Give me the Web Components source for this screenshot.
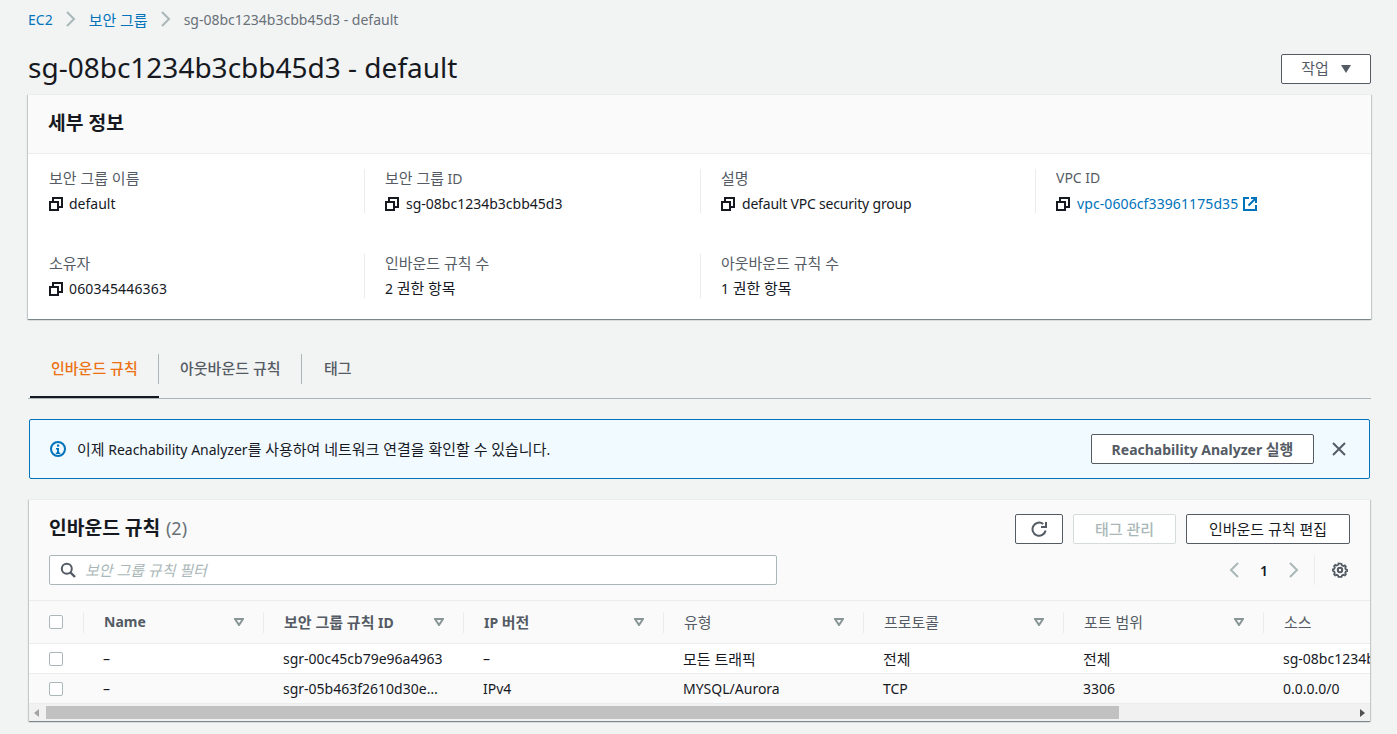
<!DOCTYPE html>
<html lang="ko">
<head>
<meta charset="utf-8">
<title>sg-08bc1234b3cbb45d3 - default</title>
<style>
  html, body { margin: 0; height: 100%; overflow: hidden; }
  body {
    --ko: 1.07;
    background: #f2f3f3;
    color: #16191f;
    font-family: "Noto Sans", "Noto Sans CJK KR", sans-serif;
    font-size: 14px;
  }
</style>
</head>
<body>
<sg-page></sg-page>

<script>
// hangul runs are drawn a bit larger than latin, like in the reference
const ko = (s) => s.replace(/[가-힣]+(?: [가-힣]+)*/g, (m) => `<span style="font-size:calc(1em * var(--ko))">${m}</span>`);

const ICONS = {
  copy: `<svg width="14" height="14" viewBox="0 0 14 14" fill="none" stroke="#16191f" stroke-width="2"><rect x="1" y="5" width="8" height="8"/><path d="M4 4V1h9v9h-3"/></svg>`,
  external: `<svg width="14" height="14" viewBox="0 0 14 14" fill="none" stroke="#0073bb" stroke-width="2"><path d="M6 1H1v12h12V8"/><path d="M5.5 8.5L12.5 1.5"/><path d="M8 1h5v5"/></svg>`,
  info: `<svg width="16" height="16" viewBox="0 0 16 16"><circle cx="8" cy="8" r="7" fill="none" stroke="#0073bb" stroke-width="2"/><rect x="7" y="3.5" width="2.2" height="2.2" fill="#0073bb"/><path d="M6 7h3v4.5h1.2V13H5.8v-1.5H7V8.4H6z" fill="#0073bb"/></svg>`,
  close: `<svg width="14" height="14" viewBox="0 0 14 14" fill="none" stroke="#545b64" stroke-width="2"><path d="M1 1l12 12M13 1L1 13"/></svg>`,
  refresh: `<svg width="17" height="17" viewBox="0 0 17 17" fill="none" stroke="#545b64" stroke-width="2"><path d="M14.6 9.5A6.6 6.6 0 1 1 12.2 3"/><path d="M15 1v5h-5" /></svg>`,
  search: `<svg width="16" height="16" viewBox="0 0 16 16" fill="none" stroke="#545b64" stroke-width="2"><circle cx="6.8" cy="6.8" r="5"/><path d="M10.5 10.5l4.5 4.5" stroke-width="2.4"/></svg>`,
  gear: `<svg width="16" height="16" viewBox="0 0 16 16" fill="none" stroke="#545b64" stroke-width="2"><path d="M8 1l1.7.3.5 1.6 1.6.7 1.5-.7 1.2 1.3-.7 1.5.6 1.5 1.6.6v1.4l-1.6.6-.6 1.5.7 1.5-1.2 1.3-1.5-.7-1.6.7-.5 1.6H6.3l-.5-1.6-1.6-.7-1.5.7-1.2-1.3.7-1.5-.6-1.5L0 8.7V7.3l1.6-.6.6-1.5-.7-1.5 1.2-1.3 1.5.7 1.6-.7.5-1.6z" transform="translate(.8 .8) scale(.9)"/><circle cx="8" cy="8" r="2.2"/></svg>`,
  chevronLeft: `<svg width="10" height="16" viewBox="0 0 10 16" fill="none" stroke="#aab7b8" stroke-width="2"><path d="M9 1L2 8l7 7"/></svg>`,
  chevronRight: `<svg width="10" height="16" viewBox="0 0 10 16" fill="none" stroke="#aab7b8" stroke-width="2"><path d="M1 1l7 7-7 7"/></svg>`,
  sort: `<svg width="10" height="8" viewBox="0 0 10 8" fill="none" stroke="#879596" stroke-width="2"><path d="M1 1h8L5 7z"/></svg>`
};

class SgButton extends HTMLElement {
  constructor() {
    super();
    this.attachShadow({ mode: "open" });
    this.shadowRoot.innerHTML = /* html */`
      <style>
        :host {
          display: inline-flex;
          align-items: center;
          justify-content: center;
          box-sizing: border-box;
          height: 30px;
          padding: 0 20px 2px;
          background: #fff;
          border: 1px solid #545b64;
          border-radius: 2px;
          color: #545b64;
          font-size: 14px;
          font-weight: 500;
          white-space: nowrap;
        }
        :host([disabled]) {
          border-color: #d5dbdb;
          color: #aab7b8;
        }
      </style>
      <slot></slot>`;
  }
}

class SgBreadcrumbs extends HTMLElement {
  constructor() {
    super();
    this.attachShadow({ mode: "open" });
    this.shadowRoot.innerHTML = /* html */`
      <style>
        :host {
          display: flex;
          align-items: center;
          height: 38px;
          font-size: 14px;
          color: #687078;
        }
        a { color: #0073bb; text-decoration: none; }
        svg { margin: 0 13px; }
      </style>
      <a>EC2</a>
      ${ICONS.chevronRight}
      <a>${ko("보안 그룹")}</a>
      ${ICONS.chevronRight}
      <span>sg-08bc1234b3cbb45d3 - default</span>`;
  }
}

class SgPageHeader extends HTMLElement {
  constructor() {
    super();
    this.attachShadow({ mode: "open" });
    this.shadowRoot.innerHTML = /* html */`
      <style>
        :host {
          display: flex;
          align-items: center;
          justify-content: space-between;
          height: 56px;
        }
        h1 { margin: 2px 0 0; font-size: 28px; font-weight: 400; line-height: 36px; color: #16191f; }
        sg-button { align-self: flex-end; margin-bottom: 10px; width: 90px; padding: 0 0 3px; gap: 12px; font-weight: 400; }
        i { width: 0; height: 0; margin-top: 3px; border: 5px solid transparent; border-top: 8px solid #545b64; border-bottom: 0; }
      </style>
      <h1><slot></slot></h1>
      <sg-button><span>${ko("작업")}</span><i></i></sg-button>`;
  }
}

class SgDetail extends HTMLElement {
  constructor() {
    super();
    this.attachShadow({ mode: "open" });
  }
  connectedCallback() {
    const copy = this.hasAttribute("copy") ? ICONS.copy : "";
    this.shadowRoot.innerHTML = /* html */`
      <style>
        :host {
          display: block;
          box-sizing: border-box;
          height: 44px;
          padding-left: 20px;
          border-left: 1px solid #eaeded;
        }
        :host([first]) { padding-left: 0; border-left: 0; }
        .label { height: 25px; margin-top: -1px; line-height: 20px; color: #545b64; }
        .value { display: flex; align-items: center; gap: 7px; height: 22px; line-height: 22px; color: #16191f; }
        :host([first]) .value { gap: 6px; }
        svg { flex: none; }
      </style>
      <div class="label">${ko(this.getAttribute("label"))}</div>
      <div class="value">${copy}<span><slot></slot></span></div>`;
  }
}

class SgCard extends HTMLElement {
  constructor() {
    super();
    this.attachShadow({ mode: "open" });
    this.shadowRoot.innerHTML = /* html */`
      <style>
        :host {
          display: block;
          background: #fff;
          border-top: 1px solid #eaeded;
          box-shadow: 0 1px 1px 0 rgba(0,28,36,.3), 1px 1px 1px 0 rgba(0,28,36,.15), -1px 1px 1px 0 rgba(0,28,36,.15);
        }
      </style>
      <slot></slot>`;
  }
}

class SgDetailsCard extends HTMLElement {
  constructor() {
    super();
    this.attachShadow({ mode: "open" });
    this.shadowRoot.innerHTML = /* html */`
      <style>
        :host { display: block; }
        header {
          box-sizing: border-box;
          height: 59px;
          padding: 0 20px 5px;
          display: flex;
          align-items: center;
          background: #fafafa;
          border-bottom: 1px solid #eaeded;
          font-size: 18px;
          font-weight: 700;
          color: #16191f;
        }
        .grid {
          box-sizing: border-box;
          height: 165px;
          padding: 15px 0 0 21px;
          display: grid;
          grid-template-columns: 315px 336px 335px 336px;
          grid-auto-rows: 85px;
          align-content: start;
        }
        a { color: #0073bb; display: inline-flex; align-items: center; gap: 5px; letter-spacing: .1px; }
        .wide { letter-spacing: .17px; }
        .narrow { letter-spacing: -.2px; }
        .up { position: relative; top: -1px; }
      </style>
      <sg-card>
        <header><span>${ko("세부 정보")}</span></header>
        <div class="grid">
          <sg-detail first label="보안 그룹 이름" copy>default</sg-detail>
          <sg-detail label="보안 그룹 ID" copy>sg-08bc1234b3cbb45d3</sg-detail>
          <sg-detail label="설명" copy><span class="narrow">default VPC security group</span></sg-detail>
          <sg-detail label="VPC ID" copy><a>vpc-0606cf33961175d35 ${ICONS.external}</a></sg-detail>
          <sg-detail first label="소유자" copy><span class="wide">060345446363</span></sg-detail>
          <sg-detail label="인바운드 규칙 수"><span class="up">2 ${ko("권한 항목")}</span></sg-detail>
          <sg-detail label="아웃바운드 규칙 수"><span class="up">1 ${ko("권한 항목")}</span></sg-detail>
        </div>
      </sg-card>`;
  }
}

class SgTabs extends HTMLElement {
  constructor() {
    super();
    this.attachShadow({ mode: "open" });
    this.shadowRoot.innerHTML = /* html */`
      <style>
        :host {
          display: flex;
          box-sizing: border-box;
          height: 60px;
          margin-top: 20px;
          padding: 15px 0 0 2px;
          border-bottom: 1px solid #aab7b8;
          font-size: 15px;
          font-weight: 500;
          color: #545b64;
        }
        .tab { position: relative; height: 30px; line-height: 28px; padding: 0 21px; border-right: 1px solid #aab7b8; white-space: nowrap; }
        .tab:last-child { border-right: 0; padding-left: 22px; }
        .active { color: #ec7211; width: 86px; }
        .second { width: 100px; }
        .active::after {
          content: "";
          position: absolute;
          left: 0; right: -1px; bottom: -14px;
          height: 2px;
          background: #16191f;
        }
      </style>
      <div class="tab active">인바운드 규칙</div>
      <div class="tab second">아웃바운드 규칙</div>
      <div class="tab">태그</div>`;
  }
}

class SgAlert extends HTMLElement {
  constructor() {
    super();
    this.attachShadow({ mode: "open" });
    this.shadowRoot.innerHTML = /* html */`
      <style>
        :host {
          display: flex;
          align-items: center;
          box-sizing: border-box;
          height: 60px;
          margin: 20px 1px 0;
          padding: 0 23px 0 20px;
          background: #f1faff;
          border: 1px solid #0073bb;
          border-radius: 2px;
          color: #16191f;
        }
        .icon { display: flex; margin-right: 11px; }
        .text { flex: 1; padding-bottom: 2px; }
        sg-button { width: 223px; padding: 0 0 2px; font-weight: 700; }
        .close { display: flex; margin-left: 18px; }
      </style>
      <span class="icon">${ICONS.info}</span>
      <span class="text">${ko("이제")} Reachability Analyzer${ko("를 사용하여 네트워크 연결을 확인할 수 있습니다")}.</span>
      <sg-button><span>Reachability Analyzer ${ko("실행")}</span></sg-button>
      <span class="close">${ICONS.close}</span>`;
  }
}

class SgCheckbox extends HTMLElement {
  constructor() {
    super();
    this.attachShadow({ mode: "open" });
    this.shadowRoot.innerHTML = /* html */`
      <style>
        :host {
          display: block;
          box-sizing: border-box;
          width: 14px;
          height: 14px;
          background: #fff;
          border: 1px solid #aab7b8;
          border-radius: 2px;
        }
      </style>`;
  }
}

class SgRulesTable extends HTMLElement {
  static get columns() {
    return [
      { title: "Name", bold: true },
      { title: "보안 그룹 규칙 ID", bold: true },
      { title: "IP 버전", bold: true },
      { title: "유형" },
      { title: "프로토콜" },
      { title: "포트 범위" },
      { title: "소스" }
    ];
  }
  static get rows() {
    return [
      ["–", "sgr-00c45cb79e96a4963", "–", "모든 트래픽", "전체", "전체", "sg-08bc1234b3cbb45d3"],
      ["–", "sgr-05b463f2610d30e…", "IPv4", "MYSQL/Aurora", "TCP", "3306", "0.0.0.0/0"]
    ];
  }
  constructor() {
    super();
    this.attachShadow({ mode: "open" });
    const head = SgRulesTable.columns.map((c, i) => /* html */`
      <div class="th ${c.bold ? "bold" : ""}">
        <span>${ko(c.title)}</span>
        ${i < 6 ? ICONS.sort : ""}
      </div>`).join("");
    const rows = SgRulesTable.rows.map((r) => /* html */`
      <div class="tr">
        <div class="sel"><sg-checkbox></sg-checkbox></div>
        ${r.map((v) => `<div class="td">${ko(v)}</div>`).join("")}
      </div>`).join("");
    this.shadowRoot.innerHTML = /* html */`
      <style>
        :host { display: block; margin: 20px 0 0 1px; width: 1341px; }
        .top {
          box-sizing: border-box;
          height: 100px;
          padding: 14px 20px 0;
          background: #fafafa;
          display: grid;
          grid-template-columns: 1fr auto;
          grid-template-rows: 41px 30px;
        }
        h2 { margin: 0; font-size: 18px; font-weight: 700; line-height: 28px; color: #16191f; }
        h2 .count { margin-left: 1px; font-weight: 400; color: #687078; font-size: 18px; }
        .actions { display: flex; gap: 10px; height: 30px; }
        .refresh { width: 48px; padding: 0; }
        .manage { width: 103px; }
        .edit { width: 164px; padding: 0 0 2px; font-weight: 400; color: #16191f; }
        .search {
          box-sizing: border-box;
          width: 728px;
          height: 30px;
          display: flex;
          align-items: center;
          gap: 9px;
          padding: 0 10px;
          background: #fff;
          border: 1px solid #aab7b8;
          border-radius: 2px;
          color: #aab7b8;
          font-style: italic;
        }
        .search span { padding-bottom: 2px; }
        .pager { display: flex; align-items: center; justify-content: flex-end; height: 30px; font-weight: 600; color: #16191f; font-size: 14px; }
        .pager .num { margin: 0 21px 0 21px; }
        .pager .sep { height: 30px; margin-left: 15px; border-left: 1px solid #eaeded; padding-left: 17px; display: flex; align-items: center; margin-right: 2px; }
        .table { overflow: hidden; border-top: 1px solid #eaeded; }
        .grid-head, .tr { display: grid; grid-template-columns: 54px 180px repeat(6, 200px); width: 1434px; }
        .grid-head { box-sizing: border-box; height: 43px; background: #fafafa; border-bottom: 1px solid #eaeded; align-items: center; }
        .sel { padding-left: 20px; display: flex; align-items: center; }
        .th {
          box-sizing: border-box;
          height: 21px;
          display: flex;
          align-items: center;
          justify-content: space-between;
          padding: 0 19px 0 20px;
          border-left: 1px solid #eaeded;
          color: #545b64;
          font-weight: 400;
        }
        .th span { padding-bottom: 2px; }
        .th.bold { font-weight: 700; }
        .tr { height: 30px; align-items: center; background: #fff; border-bottom: 1px solid #eaeded; box-sizing: border-box; }
        .tr:nth-child(3) { background: #fafafa; }
        .td { padding-left: 20px; color: #16191f; white-space: nowrap; }
        .scroll { display: flex; align-items: center; height: 17px; background: #f1f1f1; }
        .arrow { width: 0; height: 0; border: 4px solid transparent; }
        .arrow.l { border-right: 5px solid #a3a3a3; border-left: 0; margin: 0 7px 0 5px; }
        .arrow.r { border-left: 5px solid #505050; border-right: 0; margin: 0 5px 0 auto; }
        .thumb { width: 1073px; height: 13px; background: #c1c1c1; }
      </style>
      <sg-card>
        <div class="top">
          <h2>${ko("인바운드 규칙")} <span class="count">(2)</span></h2>
          <div class="actions">
            <sg-button class="refresh">${ICONS.refresh}</sg-button>
            <sg-button class="manage" disabled>${ko("태그 관리")}</sg-button>
            <sg-button class="edit">${ko("인바운드 규칙 편집")}</sg-button>
          </div>
          <div class="search">${ICONS.search}<span>${ko("보안 그룹 규칙 필터")}</span></div>
          <div class="pager">
            ${ICONS.chevronLeft}
            <span class="num">1</span>
            ${ICONS.chevronRight}
            <span class="sep">${ICONS.gear}</span>
          </div>
        </div>
        <div class="table">
          <div class="grid-head">
            <div class="sel"><sg-checkbox></sg-checkbox></div>
            ${head}
          </div>
          ${rows}
        </div>
        <div class="scroll">
          <i class="arrow l"></i>
          <div class="thumb"></div>
          <i class="arrow r"></i>
        </div>
      </sg-card>`;
  }
}

class SgPage extends HTMLElement {
  constructor() {
    super();
    this.attachShadow({ mode: "open" });
    this.shadowRoot.innerHTML = /* html */`
      <style>
        :host { display: block; box-sizing: border-box; width: 1397px; padding: 0 26px 0 28px; }
      </style>
      <sg-breadcrumbs></sg-breadcrumbs>
      <sg-page-header>sg-08bc1234b3cbb45d3 - default</sg-page-header>
      <sg-details-card></sg-details-card>
      <sg-tabs></sg-tabs>
      <sg-alert></sg-alert>
      <sg-rules-table></sg-rules-table>`;
  }
}

customElements.define("sg-button", SgButton);
customElements.define("sg-breadcrumbs", SgBreadcrumbs);
customElements.define("sg-page-header", SgPageHeader);
customElements.define("sg-detail", SgDetail);
customElements.define("sg-card", SgCard);
customElements.define("sg-details-card", SgDetailsCard);
customElements.define("sg-tabs", SgTabs);
customElements.define("sg-alert", SgAlert);
customElements.define("sg-checkbox", SgCheckbox);
customElements.define("sg-rules-table", SgRulesTable);
customElements.define("sg-page", SgPage);
</script>
</body>
</html>
